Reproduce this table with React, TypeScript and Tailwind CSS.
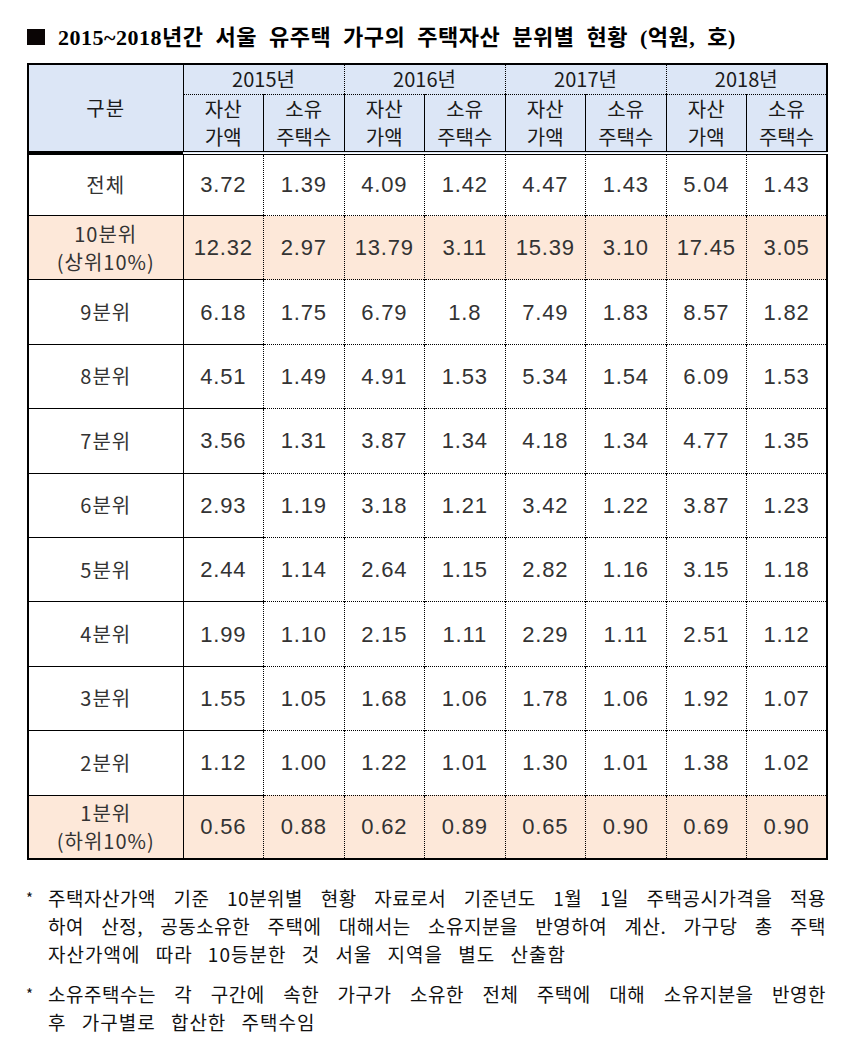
import React from 'react';

const years = ['2015년', '2016년', '2017년', '2018년'];

const rows: { label: string[]; values: string[]; hl?: boolean; h: string }[] = [
  { label: ['전체'], values: ['3.72', '1.39', '4.09', '1.42', '4.47', '1.43', '5.04', '1.43'], h: 'h-[63px]' },
  { label: ['10분위', '(상위10%)'], values: ['12.32', '2.97', '13.79', '3.11', '15.39', '3.10', '17.45', '3.05'], hl: true, h: 'h-[64.4px]' },
  { label: ['9분위'], values: ['6.18', '1.75', '6.79', '1.8', '7.49', '1.83', '8.57', '1.82'], h: 'h-[64.4px]' },
  { label: ['8분위'], values: ['4.51', '1.49', '4.91', '1.53', '5.34', '1.54', '6.09', '1.53'], h: 'h-[64.4px]' },
  { label: ['7분위'], values: ['3.56', '1.31', '3.87', '1.34', '4.18', '1.34', '4.77', '1.35'], h: 'h-[64.4px]' },
  { label: ['6분위'], values: ['2.93', '1.19', '3.18', '1.21', '3.42', '1.22', '3.87', '1.23'], h: 'h-[64.4px]' },
  { label: ['5분위'], values: ['2.44', '1.14', '2.64', '1.15', '2.82', '1.16', '3.15', '1.18'], h: 'h-[64.4px]' },
  { label: ['4분위'], values: ['1.99', '1.10', '2.15', '1.11', '2.29', '1.11', '2.51', '1.12'], h: 'h-[64.4px]' },
  { label: ['3분위'], values: ['1.55', '1.05', '1.68', '1.06', '1.78', '1.06', '1.92', '1.07'], h: 'h-[64.4px]' },
  { label: ['2분위'], values: ['1.12', '1.00', '1.22', '1.01', '1.30', '1.01', '1.38', '1.02'], h: 'h-[64.4px]' },
  { label: ['1분위', '(하위10%)'], values: ['0.56', '0.88', '0.62', '0.89', '0.65', '0.90', '0.69', '0.90'], hl: true, h: 'h-[64.4px]' },
];

// 주석은 원본처럼 줄마다 끊어서 양쪽 정렬
const notes: string[][] = [
  [
    '주택자산가액 기준 10분위별 현황 자료로서 기준년도 1월 1일 주택공시가격을 적용',
    '하여 산정, 공동소유한 주택에 대해서는 소유지분을 반영하여 계산. 가구당 총 주택',
    '자산가액에 따라 10등분한 것 서울 지역을 별도 산출함',
  ],
  [
    '소유주택수는 각 구간에 속한 가구가 소유한 전체 주택에 대해 소유지분을 반영한',
    '후 가구별로 합산한 주택수임',
  ],
];

const sans = "font-['Liberation_Sans','Noto_Sans_CJK_KR',sans-serif]";

export default function App() {
  return (
    <div className={`w-[849px] h-[1049px] bg-white ${sans}`}>
      <div className="pl-[27px] pt-[22px]">
        {/* 제목 */}
        <h1 className="flex items-center h-[30px] text-[22px] font-bold text-black tracking-[0.5px] font-['Liberation_Serif','Noto_Sans_CJK_KR',serif] [word-spacing:6px]">
          <span className="inline-block w-[18px] h-[16px] bg-[#0a0505] mr-[13px]" />
          2015~2018년간 서울 유주택 가구의 주택자산 분위별 현황 (억원, 호)
        </h1>

        <table className="mt-[11px] w-[799px] table-fixed border-collapse border-2 border-black text-center">
          <colgroup>
            <col className="w-[155px]" />
            {Array.from({ length: 8 }).map((_, i) => (
              <col key={i} className="w-[80.5px]" />
            ))}
          </colgroup>
          <thead className="bg-[#dce6f6] text-[20px] font-normal text-[#1a1a1a] font-['Noto_Sans_CJK_KR',sans-serif]">
            <tr className="h-[30px]">
              <th rowSpan={2} className="font-normal tracking-[1px] border-r border-solid border-black border-b-4 border-b-double">
                구분
              </th>
              {years.map((y, i) => (
                <th
                  key={y}
                  colSpan={2}
                  className={`font-normal leading-[28px] border-b border-dotted border-black ${i > 0 ? 'border-l' : ''}`}
                >
                  {y}
                </th>
              ))}
            </tr>
            <tr className="h-[56px]">
              {years.map((y, i) => (
                <React.Fragment key={y}>
                  <th className={`font-normal leading-[28px] border-b-4 border-double border-black ${i > 0 ? 'border-l border-l-dotted' : ''}`}>
                    자산
                    <br />
                    가액
                  </th>
                  <th className="font-normal leading-[28px] border-b-4 border-double border-black border-l border-l-dotted">
                    소유
                    <br />
                    주택수
                  </th>
                </React.Fragment>
              ))}
            </tr>
          </thead>
          <tbody className="text-[#333]">
            {rows.map((r, ri) => (
              <tr key={ri} className={`${r.h} ${r.hl ? 'bg-[#fde8d9]' : 'bg-white'}`}>
                <td
                  className={`border-r border-solid border-black text-[20px] leading-[28px] tracking-[1px] font-['Noto_Sans_CJK_KR',sans-serif] ${
                    ri > 0 ? 'border-t border-t-dotted' : ''
                  }`}
                >
                  {r.label.map((l, li) => (
                    <div key={li}>{l}</div>
                  ))}
                </td>
                {r.values.map((v, vi) => (
                  <td
                    key={vi}
                    className={`text-[22px] tracking-[0.8px] font-['Liberation_Sans',sans-serif] border-black ${vi > 0 ? 'border-l border-dotted' : ''} ${
                      ri > 0 ? 'border-t border-t-dotted' : ''
                    }`}
                  >
                    {v}
                  </td>
                ))}
              </tr>
            ))}
          </tbody>
        </table>
      </div>

      {/* 주석 */}
      <div className="mt-[24px] pl-[26px] pr-[23px] text-[19px] leading-[28px] text-[#111] font-['Noto_Sans_CJK_KR',sans-serif]">
        {notes.map((lines, ni) => (
          <div key={ni} className={`flex ${ni > 0 ? 'mt-[12px]' : ''}`}>
            <span className="w-[22px] shrink-0 text-[15px]">*</span>
            <div className="flex-1 min-w-0">
              {lines.map((line, li) =>
                li < lines.length - 1 ? (
                  <div key={li} className="whitespace-nowrap tracking-[0.5px] text-justify [text-align-last:justify]">
                    {line}
                  </div>
                ) : (
                  <div key={li} className="whitespace-nowrap tracking-[1px] [word-spacing:10px]">
                    {line}
                  </div>
                ),
              )}
            </div>
          </div>
        ))}
      </div>
    </div>
  );
}
